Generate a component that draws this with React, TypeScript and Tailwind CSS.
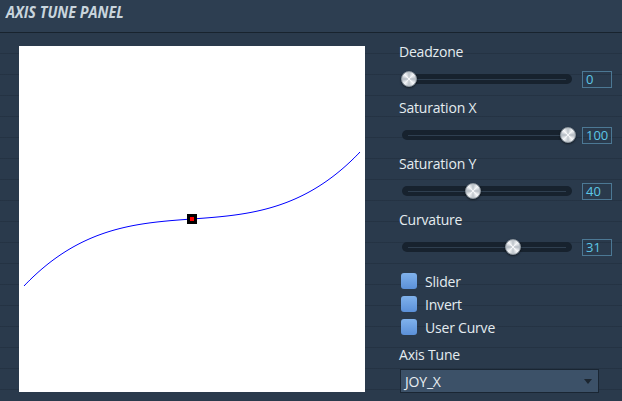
import React from "react";

type SliderProps = { label: string; value: number; min: number; max: number };

const curvePath = () => {
    // mix of linear and cubic, scaled by saturation Y (0.4)
    const pts: string[] = [];
    for (let x = 5; x <= 341; x += 2) {
        const t = (x - 173) / 168;
        const f = 0.18 * t + 0.82 * t * t * t;
        const y = 173 - 67 * f;
        pts.push(`${pts.length ? "L" : "M"}${x} ${y.toFixed(2)}`);
    }
    return pts.join(" ");
};

function Slider({ label, value, min, max }: SliderProps) {
    const pos = 7 + ((value - min) / (max - min)) * 159;
    return (
        <div className="flex flex-col">
            <div className="h-[18px] text-[14px] leading-[18px] tracking-[-0.2px] text-[#e4ecf0]">{label}</div>
            <div className="mt-[8px] flex h-[20px] items-center">
                <div className="relative ml-[3px] flex h-[10px] w-[170px] items-center rounded-full bg-[#17222e] px-[6px]">
                    <div className="h-px w-full bg-[#2f3f50]" />
                    <div
                        className="absolute top-[-3px] h-[16px] w-[16px] rounded-full border border-[#8e979f] bg-[conic-gradient(from_45deg,#f4f6f8,#b3bac2,#f7f8fa,#bdc4ca,#f4f6f8,#b0b8c0,#f7f8fa,#bac1c7,#f4f6f8)] shadow-[0_1px_2px_rgba(0,0,0,0.5)]"
                        style={{ left: pos - 8 }}
                    />
                </div>
                <div className="ml-[10px] h-[17px] w-[30px] border border-[#4c7894] pl-[3px] text-[13px] leading-[15px] text-[#5cc6e6]">
                    {value}
                </div>
            </div>
        </div>
    );
}

function Check({ label }: { label: string }) {
    return (
        <div className="flex h-[16px] items-center">
            <div className="ml-[2px] h-[16px] w-[16px] rounded-[3px] bg-gradient-to-b from-[#80b2ec] to-[#5b90d8]" />
            <span className="ml-[8px] text-[14px] tracking-[-0.2px] text-[#e4ecf0]">{label}</span>
        </div>
    );
}

export default function App() {
    return (
        <div className="h-[401px] w-[622px] overflow-hidden bg-[#2a3a4c] font-['Open_Sans',sans-serif]">
            <div className="h-[33px] border-b border-[#18232e] bg-[#2d3e51] pl-[6px]">
                <span className="inline-block origin-left scale-x-[0.9] text-[16px] font-bold italic leading-[18px] text-[#c9d5dd]">
                    AXIS TUNE PANEL
                </span>
            </div>

            <div className="flex h-[368px] bg-[repeating-linear-gradient(180deg,transparent_0px,transparent_20px,rgba(20,30,42,0.25)_20px,rgba(20,30,42,0.25)_21px)]">
                <div className="ml-[19px] mt-[13px] h-[346px] w-[346px] bg-white">
                    <svg width="346" height="346" viewBox="0 0 346 346">
                        <path d={curvePath()} fill="none" stroke="#0000ff" strokeWidth="1" />
                        <rect x="168" y="168" width="10" height="10" fill="#000" />
                        <rect x="171" y="171" width="4" height="4" fill="#ff0000" />
                    </svg>
                </div>

                <div className="ml-[34px] mt-[10px] flex w-[216px] flex-col">
                    <div className="flex flex-col gap-[10px]">
                        <Slider label="Deadzone" value={0} min={0} max={100} />
                        <Slider label="Saturation X" value={100} min={0} max={100} />
                        <Slider label="Saturation Y" value={40} min={0} max={100} />
                        <Slider label="Curvature" value={31} min={-100} max={100} />
                    </div>

                    <div className="mt-[16px] flex flex-col gap-[7px]">
                        <Check label="Slider" />
                        <Check label="Invert" />
                        <Check label="User Curve" />
                    </div>

                    <div className="mt-[11px] h-[18px] text-[14px] leading-[18px] tracking-[-0.2px] text-[#e4ecf0]">Axis Tune</div>
                    <div className="ml-[1px] mt-[5px] flex h-[24px] w-[199px] items-center justify-between border border-[#1a2633] bg-[#3c5168] pl-[4px] pr-[6px]">
                        <span className="text-[14px] tracking-[-0.2px] text-[#e8eef2]">JOY_X</span>
                        <svg width="8" height="5" viewBox="0 0 8 5">
                            <path d="M0 0 L8 0 L4 5 Z" fill="#1c2630" />
                        </svg>
                    </div>
                </div>
            </div>
        </div>
    );
}
